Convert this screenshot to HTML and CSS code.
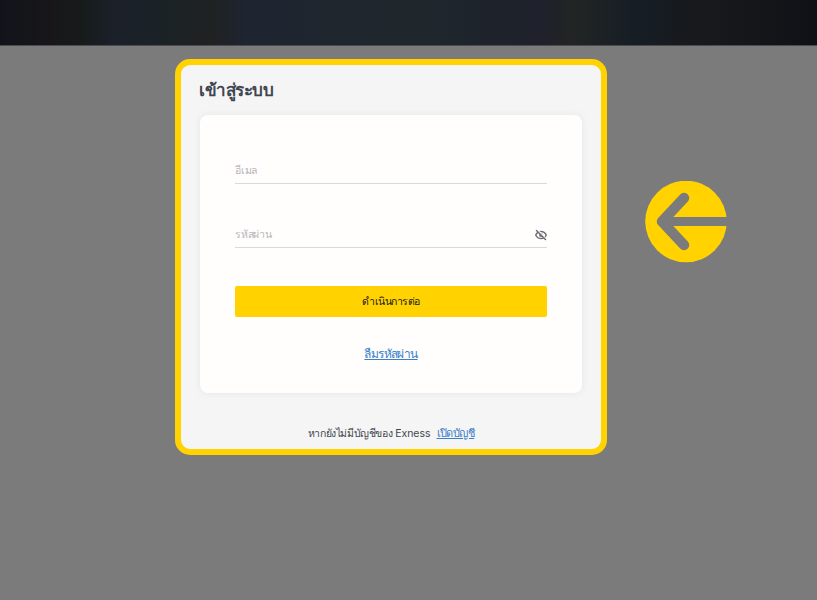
FILE: index.html
```html
<!DOCTYPE html>
<html lang="th">
<head>
<meta charset="utf-8">
<title>เข้าสู่ระบบ</title>
<link rel="stylesheet" href="styles.css">
</head>
<body>
<header class="topbar"></header>
<main class="stage">
  <section class="modal">
    <h1 class="title">เข้าสู่ระบบ</h1>
    <form class="card">
      <div class="field field-email"><span class="placeholder">อีเมล</span></div>
      <div class="field field-pass">
        <span class="placeholder">รหัสผ่าน</span>
        <svg class="eye" viewBox="0 0 24 24" width="12" height="12" aria-hidden="true">
          <path d="M1.500 12c2.300-4.800 6-7.200 10.500-7.200S20.200 7.200 22.500 12c-2.300 4.800-6 7.200-10.500 7.200S3.800 16.800 1.500 12z" fill="none" stroke="#6d7075" stroke-width="3"/>
          <circle cx="12" cy="12" r="3.800" fill="#6d7075"/>
          <path d="M5 2l17 18" stroke="#fffefd" stroke-width="3"/>
          <path d="M3 3l18 18" stroke="#6d7075" stroke-width="3" stroke-linecap="round"/>
        </svg>
      </div>
      <button class="submit" type="button">ดำเนินการต่อ</button>
      <a class="forgot" href="#">ลืมรหัสผ่าน</a>
    </form>
    <p class="signup"><span class="signup-text">หากยังไม่มีบัญชีของ</span> Exness <a href="#">เปิดบัญชี</a></p>
  </section>
  <svg class="arrow" viewBox="0 0 82 82" width="82" height="82" aria-hidden="true">
    <circle cx="41" cy="40.500" r="40.800" fill="#ffd200"/>
    <path d="M18 40.500H82" stroke="#7b7b7b" stroke-width="9"/>
    <path d="M39 17L17 40.500L39 64" fill="none" stroke="#7b7b7b" stroke-width="10.500" stroke-linecap="round" stroke-linejoin="round"/>
  </svg>
</main>
</body>
</html>
```
FILE: styles.css
```css
* { box-sizing: border-box; }
html, body { margin: 0; height: 100%; }
body {
  background: #7b7b7b;
  font-family: Inter, "Noto Sans", Roboto, sans-serif;
  overflow: hidden;
}
.topbar {
  height: 46px;
  border-bottom: 1px solid #4a4d50;
  background: linear-gradient(90deg, #10141a 0%, #181619 6%, #161b1a 10%, #1b202a 14%, #1b2226 20%, #1f2222 26%, #1e2430 30%, #1f272c 50%, #1e212b 66%, #212524 70%, #161d25 78%, #17191b 86%, #15161a 92%, #101116 100%);
}
.stage {
  display: flex;
  align-items: flex-start;
  padding: 13px 0 0 175px;
  gap: 38px;
}
.modal {
  width: 432px;
  height: 396px;
  border: 6px solid #ffd200;
  border-radius: 15px;
  background: #f5f5f5;
  padding: 0 19px;
  display: flex;
  flex-direction: column;
}
.title {
  margin: 0 0 0 -1px;
  height: 50px;
  padding-top: 10px;
  font-size: 17px;
  line-height: 30px;
  font-weight: 700;
  letter-spacing: -0.45px;
  color: #3f4651;
}
.card {
  height: 278px;
  background: #fffefd;
  border-radius: 8px;
  box-shadow: 0 0 6px rgba(200, 202, 215, .35);
  padding: 0 35px;
  display: flex;
  flex-direction: column;
}
.field {
  height: 28px;
  border-bottom: 1px solid #d8d9dc;
  padding-top: 2px;
  display: flex;
  align-items: center;
  justify-content: space-between;
}
.field-email { margin-top: 41px; }
.field-pass { margin-top: 36px; }
.placeholder {
  font-size: 10.500px;
  letter-spacing: -0.25px;
  color: #b4b6bb;
}
.submit {
  margin-top: 38px;
  height: 31px;
  border: 0;
  border-radius: 2px;
  background: #ffd200;
  color: #1a1a1c;
  font: 500 10.500px Inter, "Noto Sans", Roboto, sans-serif;
  letter-spacing: -0.5px;
}
.forgot {
  margin-top: 27px;
  align-self: center;
  font-size: 12px;
  line-height: 20px;
  font-weight: 500;
  letter-spacing: -0.6px;
  color: #3b7fc9;
}
.signup {
  margin: 31px 0 0;
  text-align: center;
  font-size: 10.500px;
  line-height: 18px;
  color: #3f4651;
}
.signup-text { letter-spacing: -0.4px; }
.signup a {
  margin-left: 3px;
  font-size: 11px;
  letter-spacing: -0.55px;
  color: #3b7fc9;
}
.arrow { margin-top: 122px; }
```
